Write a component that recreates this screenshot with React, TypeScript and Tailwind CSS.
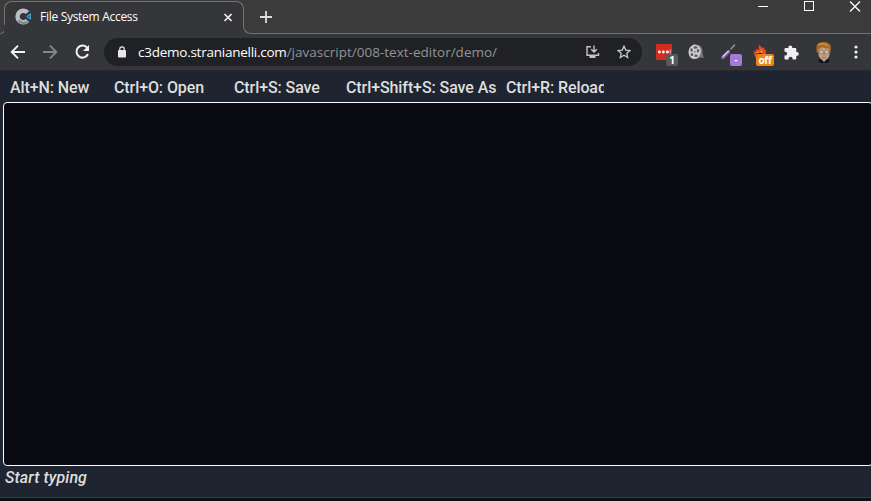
import React from 'react';

const ui = "font-['Open_Sans','Noto_Sans',sans-serif]";

function Logo() {
  return (
    <svg className="h-[17px] w-[17px] shrink-0" viewBox="0 0 17 17" fill="none">
      <path d="M12.6 4.6A5.8 5.8 0 1 0 12.6 12.4" stroke="#b9bfc3" strokeWidth="4.4" />
      <path d="M3.4 12.2A6.4 6.4 0 0 0 13 13.4" stroke="#838b92" strokeWidth="2.4" />
      <path d="M15.4 5.8v5.4l-3.6-2.7z" fill="#176b91" stroke="#38b6e4" strokeWidth="1" />
    </svg>
  );
}

function TabStrip() {
  return (
    <div className="flex h-[34px] shrink-0 items-end bg-[#3b3b3b]">
      <div className="-mr-px h-[9px] w-[5px] rounded-br-[5px] border-b border-r border-[#73726f]" />
      <div className="flex h-[34px] w-[240px] shrink-0 flex-col">
        <div className="h-[1px]" />
        <div className="flex h-[24px] items-start rounded-t-[8px] border-x border-t border-[#73726f] bg-[#35363a] pl-[10px] pt-[6px]">
          <Logo />
          <div className={`ml-[8px] w-[183px] whitespace-nowrap text-[12px] leading-[17px] tracking-[-0.29px] text-white ${ui}`}>File System Access</div>
          <svg className="mt-[5px] h-[9px] w-[9px]" viewBox="0 0 9 9" stroke="#eee" strokeWidth="1.6"><path d="M1.5 1l7 7M8.5 1l-7 7" /></svg>
        </div>
        <div className="h-[9px] bg-[#35363a]" />
      </div>
      <div className="-ml-px h-[9px] flex-1 rounded-bl-[8px] border-b border-l border-[#73726f]" />
      <div className="flex h-[33px] w-0 items-start">
        <svg className="-ml-[611px] mt-[9px] h-[13px] w-[13px] shrink-0" viewBox="0 0 13 13" stroke="#ddd" strokeWidth="1.8"><path d="M6 1v12M0 7h12" /></svg>
        <svg className="ml-[485px] h-[12px] w-[104px] shrink-0" viewBox="0 0 104 12" fill="none" stroke="#fff" shapeRendering="crispEdges">
          <path d="M0 5.5h10M46.5 .5h9v9h-9z" />
          <path d="M92 .5l10 10M102 .5l-10 10" strokeWidth="1.2" shapeRendering="auto" />
        </svg>
      </div>
    </div>
  );
}

function Toolbar() {
  return (
    <div className="flex h-[36px] shrink-0 items-center bg-[#35363a] pl-[10px]">
      <svg className="h-4 w-4 shrink-0" viewBox="0 0 16 16" fill="none" stroke="#f2f2f2" strokeWidth="1.9"><path d="M15 8H2M8 1.7L1.7 8 8 14.3" /></svg>
      <svg className="ml-4 h-4 w-4 shrink-0" viewBox="0 0 16 16" fill="none" stroke="#85868a" strokeWidth="1.9"><path d="M1 8h13M8 1.7L14.3 8 8 14.3" /></svg>
      <svg className="ml-4 h-4 w-4 shrink-0" viewBox="0 0 16 16"><path d="M13.3 4A6 6 0 1 0 14 10" fill="none" stroke="#f2f2f2" strokeWidth="2" /><path d="M15 1v6H9z" fill="#f2f2f2" /></svg>
      <div className="ml-[14px] flex h-[28px] w-[538px] shrink-0 items-center rounded-full bg-[#202124] pl-[14px]">
        <svg className="h-[12px] w-[8px] shrink-0" viewBox="0 0 8 12"><path d="M1.8 5V3a2.2 2.2 0 0 1 4.4 0v2" fill="none" stroke="#e8e8e8" strokeWidth="1.2" /><rect y="4" width="8" height="7.5" rx=".8" fill="#e8e8e8" /></svg>
        <div className={`ml-[12px] w-[447px] whitespace-nowrap text-[13.5px] leading-5 text-[#929396] ${ui}`}><span className="tracking-[-0.25px] text-white">c3demo.stranianelli.com</span><span className="tracking-[0.01px]">/javascript/008-text-editor/demo/</span></div>
        <svg className="ml-px h-[14px] w-[14px] shrink-0" viewBox="0 0 14 14" fill="none" stroke="#c7c3c6" strokeWidth="1.4"><path d="M5 1.7H1v8.6h11.5V8M8 .5v6M5.2 4.2L8 7.1l2.9-2.9" /><path d="M3.5 12h6" strokeWidth="2" /></svg>
        <svg className="ml-[17px] h-[14px] w-[14px] shrink-0" viewBox="0 0 14 14" fill="none" stroke="#c9c8ca" strokeWidth="1.3"><path d="M7 1.2l1.7 3.9 4.3.4-3.2 2.8.9 4.2L7 10.3l-3.7 2.2.9-4.2L1 5.5l4.3-.4z" /></svg>
      </div>
      <div className="relative ml-[14px] h-4 w-4 shrink-0">
        <svg viewBox="0 0 16 16"><rect width="16" height="16" rx="1" fill="#d32d20" /><g fill="#fff"><circle cx="3.4" cy="8" r="1.4" /><circle cx="7.4" cy="8" r="1.4" /><circle cx="11.4" cy="8" r="1.4" /></g><path d="M14.2 5.5v4" stroke="#f6b0a5" strokeWidth="1" /></svg>
        <div className={`absolute left-[10px] top-[10px] h-[12px] w-[12px] rounded-[2px] bg-[#5a5a5a] text-center text-[10px] font-bold leading-[13px] text-white ${ui}`}>1</div>
      </div>
      <svg className="ml-4 h-4 w-4 shrink-0" viewBox="0 0 16 16">
        <path d="M5 .7l6 .3Q15 3 14.5 9l1.2 5-3-.5L8 15z" fill="#777979" />
        <ellipse cx="6.7" cy="7.8" rx="6.1" ry="7.3" fill="#c9cac9" transform="rotate(12 6.7 7.8)" />
        <g fill="#555758"><ellipse cx="7.5" cy="3.5" rx="1.8" ry="1.3" /><ellipse cx="3.6" cy="6" rx="1.2" ry="1.8" /><ellipse cx="10" cy="6.8" rx="1.2" ry="1.8" /><ellipse cx="4" cy="10.5" rx="1.2" ry="1.6" /><ellipse cx="8" cy="11.8" rx="1.6" ry="1.3" /><circle cx="6.8" cy="7.8" r=".8" /></g>
      </svg>
      <div className="relative ml-[17px] h-4 w-4 shrink-0">
        <svg viewBox="0 0 16 16" fill="none" strokeLinecap="round"><path d="M1.8 13.5l6-6" stroke="#7c69b8" strokeWidth="3.2" /><path d="M2 12.5l5.3-5.3" stroke="#ddd8f1" strokeWidth="1.2" /><path d="M8.5 6.5L13.5 1" stroke="#87909c" strokeWidth="1.6" /><path d="M8 4.8l2.7 2.7" stroke="#202329" strokeWidth="1.2" /></svg>
        <div className={`absolute left-[9px] top-[10px] h-[12px] w-[12px] rounded-[2px] bg-[#a77ad9] text-center text-[9px] font-bold leading-[11px] text-white ${ui}`}>-</div>
      </div>
      <div className="relative ml-4 h-4 w-4 shrink-0">
        <svg viewBox="0 0 16 16"><path d="M1.5 11L.5 7l2 .7.5-2.7L5.5 6 6 .5 9.5 4l1.5-.5.7 2.5 1.5-.3-.7 5.3-2 5H4z" fill="#e84920" /><path d="M3.5 9l1.5-2 2 1 1.5-3 1.5 4z" fill="#f08b2b" /><path d="M3 11q3.5-5 8 0z" fill="#3b211b" /></svg>
        <div className={`absolute left-[3px] top-[10px] h-[12px] w-[18px] rounded-[2px] bg-[#ef8414] text-center text-[10px] font-bold leading-[12px] tracking-[-0.3px] text-white ${ui}`}>off</div>
      </div>
      <svg className="ml-[15px] h-[15px] w-[15px] shrink-0" viewBox="0 0 15 15"><path d="M1.5 3H4.3V2.4a2 2 0 0 1 4 0V3h3q1 0 1 1v3h.6a1.9 1.9 0 0 1 0 3.8h-.6v2.8q0 1-1 1H8.6v-.8a2 2 0 0 0-4 0v.8H1.5q-1 0-1-1v-3h.7a1.9 1.9 0 0 0 0-3.8H.5V4q0-1 1-1z" fill="#f1f1f3" /></svg>
      <svg className="ml-[15px] h-[22px] w-[20px] shrink-0" viewBox="0 0 20 22">
        <path d="M4 19l6-3 6 3-2 3H6z" fill="#111722" /><path d="M7.5 17l2.5 4 2.5-4z" fill="#d9dbdc" />
        <path d="M4 6h12l-.5 8q-1 4-5.5 6-4.5-2-5.5-6z" fill="#c99e7c" />
        <path d="M2.5 11.5V5Q4 .8 9.5 1q6.5 0 7.5 4.5l-.5 6-1.3-1V7.5Q11 8 8 6 6 8 4.2 8.5v3z" fill="#a66a28" /><path d="M4 4q4-3 10 1" stroke="#d48e3b" strokeWidth="1.4" fill="none" />
        <g fill="#bcc5c5" stroke="#74675d" strokeWidth=".6"><circle cx="7.3" cy="11" r="2" /><circle cx="12.7" cy="11" r="2" /></g><path d="M10 12v2.5M8 16.5h4" stroke="#8e634a" strokeWidth=".8" />
      </svg>
      <svg className="ml-[20px] h-[14px] w-[4px] shrink-0" viewBox="0 0 4 14" fill="#f1f1f1"><circle cx="2" cy="2" r="1.6" /><circle cx="2" cy="7" r="1.6" /><circle cx="2" cy="12" r="1.6" /></svg>
    </div>
  );
}

export default function App() {
  return (
    <main className="flex h-[501px] w-[871px] flex-col overflow-hidden bg-[#1f2530]">
      <TabStrip />
      <Toolbar />
      <div className="h-px shrink-0 bg-[#27292c]" />
      <nav className="flex h-[31px] shrink-0 whitespace-nowrap pl-[10px] pt-[4px] font-['Roboto',sans-serif] text-[16px] font-medium leading-[25px] tracking-[-0.09px] text-[#dedede]">
        <div className="w-[104px] shrink-0">Alt+N: New</div>
        <div className="w-[120px] shrink-0">Ctrl+O: Open</div>
        <div className="w-[112px] shrink-0">Ctrl+S: Save</div>
        <div className="w-[160px] shrink-0">Ctrl+Shift+S: Save As</div>
        <div className="w-[98px] shrink-0 overflow-hidden">Ctrl+R: Reload</div>
      </nav>
      <div className="ml-[3px] h-[364px] w-[870px] shrink-0 rounded-[4px] border border-white bg-[#0a0a13]" />
      <div className="h-[31px] shrink-0 pl-[5px] font-['Roboto',sans-serif] text-[16px] font-medium italic leading-[23px] tracking-[0.1px] text-[#dedede]">Start typing</div>
      <div className="h-px shrink-0 bg-[#363b3e]" />
      <div className="h-[3px] shrink-0 bg-[#0c1117]" />
    </main>
  );
}
